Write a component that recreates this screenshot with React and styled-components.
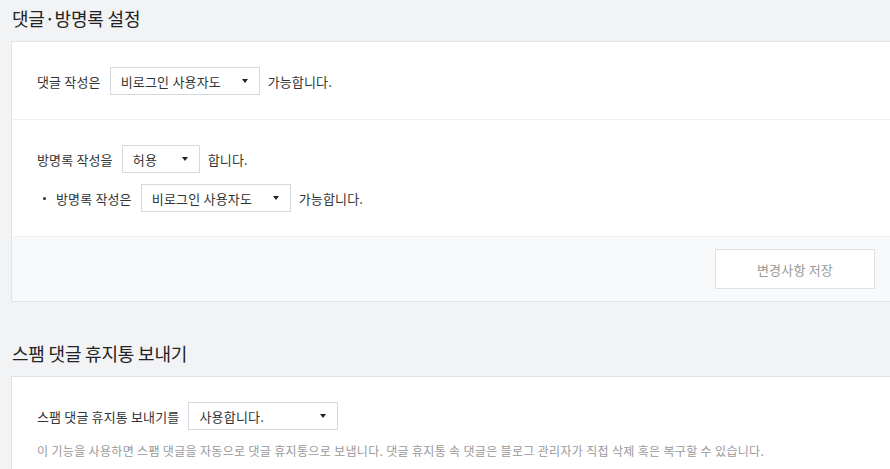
import styled, { createGlobalStyle } from "styled-components";

const GlobalStyle = createGlobalStyle`
  html, body {
    margin: 0;
    padding: 0;
    background: #f2f3f5;
    overflow: hidden;
  }
  body {
    font-family: "Noto Sans CJK KR", "Noto Sans", sans-serif;
    color: #333;
    -webkit-font-smoothing: antialiased;
  }
`;

function Select({ value, width }) {
  return (
    <SelectBox $width={width}>
      <span>{value}</span>
      <Caret />
    </SelectBox>
  );
}

export default function App() {
  return (
    <>
      <GlobalStyle />
      <Page>
        <SectionTitle>댓글·방명록 설정</SectionTitle>
        <Panel>
          <Group>
            <Row>
              댓글 작성은
              <Select value="비로그인 사용자도" width={150} />
              가능합니다.
            </Row>
          </Group>
          <Group $divided>
            <Row>
              방명록 작성을
              <Select value="허용" width={78} />
              합니다.
            </Row>
            <Row $bullet>
              방명록 작성은
              <Select value="비로그인 사용자도" width={150} />
              가능합니다.
            </Row>
          </Group>
          <Footer>
            <SaveButton>변경사항 저장</SaveButton>
          </Footer>
        </Panel>

        <SectionTitle $spaced>스팸 댓글 휴지통 보내기</SectionTitle>
        <Panel>
          <Group>
            <Row>
              스팸 댓글 휴지통 보내기를
              <Select value="사용합니다." width={150} />
            </Row>
            <Help>
              이 기능을 사용하면 스팸 댓글을 자동으로 댓글 휴지통으로 보냅니다. 댓글 휴지통 속 댓글은 블로그 관리자가 직접 삭제 혹은 복구할 수 있습니다.
            </Help>
          </Group>
        </Panel>
      </Page>
    </>
  );
}

const Page = styled.div`
  padding-left: 11px;
  width: 880px;
`;

const SectionTitle = styled.h2`
  margin: ${(p) => (p.$spaced ? "33px" : "0")} 0 0;
  padding: 6px 0 11px 1px;
  font-size: 18px;
  line-height: 24px;
  font-weight: 400;
  color: #222;
  letter-spacing: -0.2px;
`;

const Panel = styled.section`
  box-sizing: border-box;
  width: 880px;
  background: #fff;
  border: 1px solid #e1e3e8;
`;

const Group = styled.div`
  display: flex;
  flex-direction: column;
  gap: 11px;
  padding: 25px 25px 24px;
  border-top: ${(p) => (p.$divided ? "1px solid #eef0f3" : "none")};
`;

const Row = styled.div`
  display: flex;
  align-items: center;
  gap: 8px;
  font-size: 13px;
  letter-spacing: 0.15px;
  color: #333;
  height: 28px;
  padding-left: ${(p) => (p.$bullet ? "19px" : "0")};
  position: relative;

  &::before {
    content: ${(p) => (p.$bullet ? "''" : "none")};
    position: absolute;
    left: 6px;
    top: 13px;
    width: 3px;
    height: 3px;
    border-radius: 50%;
    background: #333;
  }
`;

const SelectBox = styled.div`
  box-sizing: border-box;
  width: ${(p) => p.$width}px;
  height: 28px;
  margin-left: 1px;
  padding: 0 11px 0 10px;
  display: flex;
  align-items: center;
  justify-content: space-between;
  border: 1px solid #d5d8de;
  background: #fff;
  font-size: 13px;
  letter-spacing: 0.2px;
  color: #333;
`;

const Caret = styled.span`
  width: 0;
  height: 0;
  border-left: 3.5px solid transparent;
  border-right: 3.5px solid transparent;
  border-top: 4px solid #222;
`;

const Footer = styled.div`
  display: flex;
  justify-content: flex-end;
  padding: 12px 15px;
  background: #f8f9fa;
  border-top: 1px solid #eef0f3;
`;

const SaveButton = styled.button`
  width: 160px;
  height: 40px;
  border: 1px solid #dfe1e6;
  background: #fff;
  font-family: inherit;
  font-size: 13px;
  letter-spacing: 0.2px;
  color: #999;
  cursor: pointer;
`;

const Help = styled.p`
  margin: 1px 0 0;
  font-size: 12px;
  letter-spacing: 0.33px;
  color: #999;
  line-height: 18px;
`;
